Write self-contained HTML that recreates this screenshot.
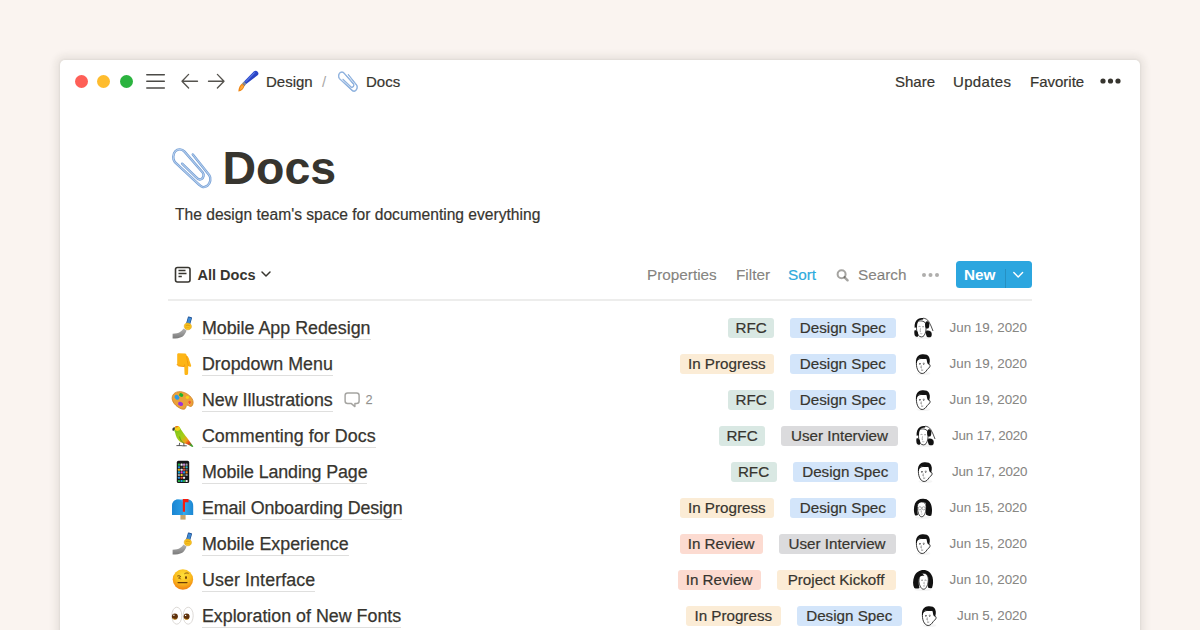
<!DOCTYPE html>
<html><head><meta charset="utf-8">
<style>
*{margin:0;padding:0;box-sizing:border-box}
html,body{width:1200px;height:630px;overflow:hidden;background:#faf4f0;font-family:"Liberation Sans",sans-serif;color:#37352f}
.win{position:absolute;left:60px;top:60px;width:1080px;height:620px;background:#fff;border-radius:5px;
 box-shadow:0 0 7px 5px rgba(45,38,32,0.075),0 0 2px 1px rgba(45,38,32,0.05)}
.abs{position:absolute;white-space:nowrap}
.dot{position:absolute;width:13px;height:13px;border-radius:50%}
.nav{font-size:15px;color:#37352f;top:72px;line-height:20px;-webkit-text-stroke:0.2px currentColor}
.tb{font-size:15.3px;line-height:20px;top:265px;color:rgba(55,53,47,0.6);-webkit-text-stroke:0.2px currentColor}
.row{position:absolute;left:168px;width:864px;height:36px}
.title{position:absolute;left:33.9px;top:7px;font-size:17.85px;-webkit-text-stroke:0.25px #37352f;line-height:22px;color:#37352f;
 border-bottom:1px solid rgba(55,53,47,0.16);padding-bottom:0}
.right{position:absolute;right:5px;top:8px;height:20px;display:flex;align-items:center}
.tag{height:20px;line-height:20px;border-radius:3px;padding:0;text-align:center;font-size:15.2px;color:#37352f;margin-right:16px;-webkit-text-stroke:0.2px #37352f}
.rfc{background:#d9e8e3;width:46px}
.ds{background:#d3e5fa;width:105.5px}
.ip{background:#fbecd6;width:94.5px}
.ui{background:#dbdbdd;width:117px}
.ir{background:#fcdbd1;width:83px}
.pk{background:#fcecd5;width:119px}
.av{width:22px;height:22px;margin-right:16px;display:flex;justify-content:center}
.date{white-space:nowrap;font-size:13.4px;color:rgba(55,53,47,0.6);-webkit-text-stroke:0.15px rgba(55,53,47,0.5);text-align:right;position:relative;top:-0.7px}
.emo{position:absolute;left:2px;top:6px;width:24px;height:24px}
</style></head><body>
<!-- DEFS -->
<svg width="0" height="0" style="position:absolute">
<defs>
 <linearGradient id="g-arm" x1="0" y1="1" x2="1" y2="0"><stop offset="0" stop-color="#8e8e8e"/><stop offset="1" stop-color="#c9c9c9"/></linearGradient>
 <linearGradient id="g-par" x1="0" y1="0" x2="1" y2="1"><stop offset="0" stop-color="#e8d23a"/><stop offset="0.35" stop-color="#5fae3a"/><stop offset="0.75" stop-color="#4f9a33"/><stop offset="1" stop-color="#e0662a"/></linearGradient>
 <radialGradient id="g-face" cx="0.4" cy="0.35" r="0.7"><stop offset="0" stop-color="#ffd35a"/><stop offset="1" stop-color="#f59a1c"/></radialGradient>
 <symbol id="e-selfie" viewBox="0 0 24 24">
  <linearGradient id="g-arm2" x1="0" y1="0" x2="0" y2="1"><stop offset="0" stop-color="#b5b5b5"/><stop offset="1" stop-color="#7a7a7a"/></linearGradient>
  <path d="M2.6 17.8C6 17.5 8.5 17 10 16C11.5 15 12.5 13.8 13.6 12.4L16.6 14.4C15.5 17.2 14 19.6 12.3 20.8C10 22.2 6.2 22.6 2.6 22.6Z" fill="url(#g-arm2)"/>
  <g transform="rotate(16 19 4.5)"><rect x="17" y="0.7" width="4.2" height="7.6" rx="0.7" fill="#1d4a8c"/><rect x="17.6" y="1.4" width="3" height="6" fill="#3f8ad2"/></g>
  <path d="M14.2 10.2C14.2 8.2 15.6 6.9 17.6 7C19.9 7.1 21.7 8.6 21.5 10.8C21.3 12.8 19.6 14 17.6 13.8C15.6 13.6 14.2 12.2 14.2 10.2Z" fill="#f7c21f" stroke="#dd9b0b" stroke-width="0.45"/><path d="M16 9.6C16.8 9 18.2 9 19.4 9.6" fill="none" stroke="#d9920a" stroke-width="0.9" stroke-linecap="round"/><path d="M15.6 11.6C16.6 11.2 18 11.3 19.2 11.8" fill="none" stroke="#e8a812" stroke-width="0.7" stroke-linecap="round"/>
 </symbol>
 <symbol id="e-point" viewBox="0 0 24 24">
  <path d="M7.2 2.6C7.2 1.7 7.9 1.2 8.8 1.2L15.2 1.4C16 1.5 16.6 2.4 16.8 3.8C18.2 4.8 19.1 6.4 19.4 8.4L21.1 13.2C21.4 14.3 20.6 15.2 19.7 14.7L18.3 13.9L18.1 21.4C18 22.4 17.1 23 16.2 23C15.2 23 14.5 22.3 14.5 21.4L14.3 14.6L9 14C8 13.9 7.2 13.1 7.2 12Z" fill="#fdb516"/>
  <path d="M14.3 14.6L14.5 12.5M16.6 4C17 7 17.6 10 18.3 13.9" fill="none" stroke="#f39a0a" stroke-width="0.9"/>
  <path d="M7.2 12C7.2 13.1 8 13.9 9 14L14.3 14.6" fill="none" stroke="#f29208" stroke-width="0.9"/>
 </symbol>
 <symbol id="e-palette" viewBox="0 0 24 24">
  <g transform="rotate(28 12.5 12.5)">
   <path d="M12.5 4.5C18.8 4.5 23.5 7.6 23.5 12C23.5 13.8 22.3 14.4 20.6 14.2C18.9 14 18 15.2 18.6 16.8C19.3 18.8 17.8 20.5 14 20.5C6.8 20.5 1.5 17.2 1.5 12.3C1.5 7.8 6.4 4.5 12.5 4.5Z" fill="#eba23a" stroke="#cf7f1c" stroke-width="0.7"/>
   <ellipse cx="19.8" cy="11.4" rx="1.3" ry="1.1" fill="#fff"/>
  </g>
  <ellipse cx="7" cy="9.3" rx="2.7" ry="2.1" transform="rotate(40 7 9.3)" fill="#2c9be8"/>
  <ellipse cx="11.2" cy="7" rx="2.2" ry="1.8" transform="rotate(30 11.2 7)" fill="#1fb32d"/>
  <ellipse cx="17.4" cy="9.5" rx="1.7" ry="1.4" fill="#f7d21a"/>
  <ellipse cx="19.6" cy="14.5" rx="1.4" ry="1.7" fill="#f05a2a"/>
  <ellipse cx="10.6" cy="15.8" rx="2.6" ry="2" transform="rotate(20 10.6 15.8)" fill="#9b33d6"/>
 </symbol>
 <symbol id="e-parrot" viewBox="0 0 24 24">
  <linearGradient id="g-par2" x1="0.1" y1="0.1" x2="0.9" y2="0.9"><stop offset="0" stop-color="#7bc41c"/><stop offset="0.45" stop-color="#a7cf16"/><stop offset="0.7" stop-color="#f0a21a"/><stop offset="0.85" stop-color="#e8401a"/><stop offset="1" stop-color="#3fa02a"/></linearGradient>
  <path d="M4.3 4.2C5.5 2 8.5 1.6 9.8 3.6C10.6 4.8 11.5 6.5 13.2 8.8C15.8 12.3 18.5 15.5 23.4 22.6L22.2 23.1C18.8 20.5 15.5 19.8 12.8 19C9.2 18 6.7 14.8 5.8 11.2C5.3 9 4.9 7.6 4.3 7Z" fill="url(#g-par2)"/>
  <path d="M9.5 12.5C10 15.5 11.5 18 14.5 19.5" fill="none" stroke="#3f8f1e" stroke-width="1.2" opacity="0.6"/>
  <path d="M4.6 3.6C5.8 1.8 8.6 1.5 9.9 3.4C10.4 4.3 10.2 5.8 8.8 6.6C7.4 7.2 5.5 6.8 4.6 5.6Z" fill="#f2d31a"/>
  <path d="M5 2.8C6 1.9 7.4 1.8 8.2 2.4C7.6 3.2 6.4 3.6 5.2 3.6Z" fill="#ee6a1e"/>
  <path d="M4.8 3.4C3.6 3.2 2.6 4 2.4 5.2C2.3 6.2 2.8 7 3.6 7.1C3.6 6.3 4.1 5.8 4.8 5.8Z" fill="#3a3a3a"/>
  <path d="M6.8 21.6H11.5M12.2 21.8H16.4M9.6 19.2L9.2 21.6M13.8 19.6L14 21.8" fill="none" stroke="#4a4a4a" stroke-width="0.9" stroke-linecap="round"/>
 </symbol>
 <symbol id="e-phone" viewBox="0 0 24 24">
  <rect x="6.8" y="0.8" width="12.4" height="22.3" rx="1.6" fill="#151517"/>
  <rect x="7.90" y="3.55" width="2.1" height="2.1" rx="0.5" fill="#22b24c"/><rect x="10.55" y="3.55" width="2.1" height="2.1" rx="0.5" fill="#f2f2f2"/><rect x="13.00" y="3.55" width="2.1" height="2.1" rx="0.5" fill="#c58ad8"/><rect x="15.55" y="3.55" width="2.1" height="2.1" rx="0.5" fill="#9a9a9a"/><rect x="7.90" y="6.15" width="2.1" height="2.1" rx="0.5" fill="#1f8fe0"/><rect x="10.55" y="6.15" width="2.1" height="2.1" rx="0.5" fill="#333"/><rect x="13.00" y="6.15" width="2.1" height="2.1" rx="0.5" fill="#b0703a"/><rect x="15.55" y="6.15" width="2.1" height="2.1" rx="0.5" fill="#27b7c8"/><rect x="7.90" y="8.75" width="2.1" height="2.1" rx="0.5" fill="#e7b21a"/><rect x="10.55" y="8.75" width="2.1" height="2.1" rx="0.5" fill="#dfe4e4"/><rect x="13.00" y="8.75" width="2.1" height="2.1" rx="0.5" fill="#d8403a"/><rect x="15.55" y="8.75" width="2.1" height="2.1" rx="0.5" fill="#666"/><rect x="7.90" y="11.35" width="2.1" height="2.1" rx="0.5" fill="#1ea7d6"/><rect x="10.55" y="11.35" width="2.1" height="2.1" rx="0.5" fill="#e43cc8"/><rect x="13.00" y="11.35" width="2.1" height="2.1" rx="0.5" fill="#1e8fe0"/><rect x="15.55" y="11.35" width="2.1" height="2.1" rx="0.5" fill="#f28a12"/><rect x="7.90" y="13.95" width="2.1" height="2.1" rx="0.5" fill="#9c9c9c"/><rect x="10.55" y="13.95" width="2.1" height="2.1" rx="0.5" fill="#f0c81c"/><rect x="13.00" y="13.95" width="2.1" height="2.1" rx="0.5" fill="#444"/><rect x="15.55" y="13.95" width="2.1" height="2.1" rx="0.5" fill="#8d8d8d"/><rect x="7.90" y="16.65" width="2.1" height="2.1" rx="0.5" fill="#2a8ee0"/><rect x="10.55" y="16.65" width="2.1" height="2.1" rx="0.5" fill="#e84a3a"/><rect x="13.00" y="16.65" width="2.1" height="2.1" rx="0.5" fill="#e8e8e8"/><rect x="15.55" y="16.65" width="2.1" height="2.1" rx="0.5" fill="#1c1c1e"/><rect x="7.90" y="19.95" width="2.1" height="2.1" rx="0.5" fill="#27b04a"/><rect x="10.55" y="19.95" width="2.1" height="2.1" rx="0.5" fill="#1eb0e0"/><rect x="13.00" y="19.95" width="2.1" height="2.1" rx="0.5" fill="#27b04a"/><rect x="15.55" y="19.95" width="2.1" height="2.1" rx="0.5" fill="#eeeeee"/>
 </symbol>
 <symbol id="e-mailbox" viewBox="0 0 24 24">
  <linearGradient id="g-mb" x1="0" y1="0" x2="1" y2="0"><stop offset="0" stop-color="#1a7fcb"/><stop offset="0.5" stop-color="#3ab0f0"/><stop offset="1" stop-color="#1b86d2"/></linearGradient>
  <rect x="10.4" y="18.4" width="5.2" height="5.2" fill="#c9a66a"/>
  <path d="M2 10C2 6.2 4.5 3.6 8 3.6H18C21 3.6 23.2 6.2 23.2 10V18.9H2Z" fill="url(#g-mb)"/>
  <path d="M2 18.9V10C2 6.2 4.5 3.6 8 3.6C11 3.6 13 6.2 13 10V18.9Z" fill="#1c8ad8" opacity="0.55"/>
  <path d="M12.8 2.9H18.5V6.2H15V15.8H12.8Z" fill="#f51d10"/>
 </symbol>
 <symbol id="e-raised" viewBox="0 0 24 24">
  <radialGradient id="g-face2" cx="0.5" cy="0.3" r="0.65"><stop offset="0" stop-color="#fde03a"/><stop offset="0.6" stop-color="#fbbd1e"/><stop offset="1" stop-color="#f28a14"/></radialGradient>
  <circle cx="12.9" cy="11.5" r="10.2" fill="url(#g-face2)"/>
  <path d="M7.2 8.2C8.2 7.4 9.8 7.6 10.8 8.6C9.8 9 8.8 9.4 8.6 10.2C9.6 10.2 10.6 10.5 10.8 11.2" fill="none" stroke="#7a4a0a" stroke-width="0.9"/>
  <ellipse cx="16" cy="9.6" rx="0.9" ry="1.6" fill="#6a3a06"/>
  <path d="M14.4 5.8C15.6 4.9 17.2 4.8 18.6 5.3" fill="none" stroke="#7a4a0a" stroke-width="0.9"/>
  <path d="M8 14.6H17" stroke="#6a3a06" stroke-width="1.1" stroke-linecap="round"/>
 </symbol>
 <symbol id="e-eyes" viewBox="0 0 24 24">
  <ellipse cx="6.8" cy="11.7" rx="5" ry="8.5" fill="#fff" stroke="#cfcac6" stroke-width="0.7"/>
  <ellipse cx="18.2" cy="11.7" rx="5" ry="8.5" fill="#fff" stroke="#cfcac6" stroke-width="0.7"/>
  <circle cx="4.9" cy="12.4" r="3" fill="#5e300a"/>
  <circle cx="16.6" cy="12.6" r="3" fill="#5e300a"/>
  <path d="M2.6 14C3.4 15.2 5 15.6 6.6 15" fill="none" stroke="#d99a1a" stroke-width="0.8"/>
  <path d="M14.3 14.2C15.1 15.4 16.7 15.8 18.3 15.2" fill="none" stroke="#d99a1a" stroke-width="0.8"/>
  <circle cx="3.9" cy="11.2" r="0.7" fill="#fff"/><circle cx="15.6" cy="11.4" r="0.7" fill="#fff"/>
 </symbol>
 <symbol id="e-brush" viewBox="0 0 24 24">
  <linearGradient id="g-brush" x1="0" y1="0" x2="1" y2="1"><stop offset="0" stop-color="#3a5ee8"/><stop offset="1" stop-color="#1c2fa8"/></linearGradient>
  <path d="M18 1.3A2.7 2.7 0 0 1 21.6 5.3L10.2 14L8 11.4Z" fill="url(#g-brush)"/>
  <path d="M18.6 2.6L10 11.6" stroke="#8fb0ff" stroke-width="0.8" stroke-linecap="round" opacity="0.8"/>
  <path d="M8 11.4L10.2 14L8.4 16.2L6.1 13.6Z" fill="#6d717a"/>
  <path d="M7.2 12.5L9.2 14.8" stroke="#b9bdc4" stroke-width="0.7"/>
  <path d="M6.1 13.6L8.4 16.2C7.8 18.8 5.5 21 2.3 21.6C2.6 18.4 3.8 15 6.1 13.6Z" fill="#ef8410"/>
  <path d="M6 15L7.3 16.4C6.8 18 5.5 19.4 3.8 19.9C4.1 18 4.8 16 6 15Z" fill="#ffa93a"/>
 </symbol>
 <symbol id="e-clip" viewBox="0 0 48 48">
   <path d="M24.8 9.5L41.3 30.2C43.5 33.2 42.3 38.5 39.3 40.8C36.3 43 33.2 42 31.5 40L6.9 17.2C4.5 14.5 4.8 9 7.3 6.3C9.8 3.6 14 3.8 16.5 6.6L34.7 27.5C36.4 29.7 35.5 32.8 33.5 34C31.5 35.2 29.5 34 28.2 32.3L14.1 18.7" fill="none" stroke="#6f9bd3" stroke-width="2.4" stroke-linecap="round"/>
   <path d="M24.8 9.5L41.3 30.2C43.5 33.2 42.3 38.5 39.3 40.8C36.3 43 33.2 42 31.5 40L6.9 17.2C4.5 14.5 4.8 9 7.3 6.3C9.8 3.6 14 3.8 16.5 6.6L34.7 27.5C36.4 29.7 35.5 32.8 33.5 34C31.5 35.2 29.5 34 28.2 32.3L14.1 18.7" fill="none" stroke="#b4cdec" stroke-width="1.1" stroke-linecap="round"/>
 </symbol>
 <symbol id="i-comment" viewBox="0 0 18 18">
  <path d="M3.6 1H12.6C14.1 1 15.1 2 15.1 3.5V8.9C15.1 10.4 14.1 11.4 12.6 11.4H10.9V14.6L7.1 11.4H3.6C2.1 11.4 1.1 10.4 1.1 8.9V3.5C1.1 2 2.1 1 3.6 1Z" fill="none" stroke="rgba(55,53,47,0.45)" stroke-width="1.45" stroke-linejoin="round"/>
 </symbol>
 <symbol id="a-m1" viewBox="0 0 22 22">
  <ellipse cx="11.5" cy="20.5" rx="7" ry="1.6" fill="#000" opacity="0.04"/>
  <path d="M4.5 8C4.2 11 4.5 14 5.4 16.2C6.4 18.8 8.2 20.5 10.2 20.5C12.2 20.5 13.8 18.8 15.3 16.5C16.2 15.5 17.2 14.8 17.8 13.8C18.4 12.6 18 11.2 16.9 11.2L16.9 6C15 4.5 7 4.5 4.5 8Z" fill="#fff" stroke="#111" stroke-width="0.85" stroke-linejoin="round"/>
  <path d="M4 9.8C3.5 6.5 4.8 3.5 7 2.2C9 1 12.5 0.8 14.8 1.8C16.8 2.8 17.9 5 17.7 8C17.6 9.5 17.1 10.8 16.4 11.6C15.6 11 15.2 9.8 15 8.5C14.8 7.2 14.6 6.2 14.2 5.8C12.5 6.3 9 6 7 5.6C6 6.5 5.2 8 4.8 10.2Z" fill="#111"/>
  <path d="M7 10.6C7.6 10.3 8.4 10.3 8.9 10.6M10.8 10.4C11.4 10.1 12.2 10.1 12.7 10.4" fill="none" stroke="#333" stroke-width="0.7"/>
  <ellipse cx="7.9" cy="11.4" rx="0.7" ry="0.45" fill="#222"/><ellipse cx="11.7" cy="11.2" rx="0.7" ry="0.45" fill="#222"/>
  <path d="M9.3 12.5L8.9 14.8L9.8 15M9 17C9.6 17.3 10.6 17.3 11.2 17" fill="none" stroke="#444" stroke-width="0.6"/>
 </symbol>
 <symbol id="a-m2" viewBox="0 0 22 22"><use href="#a-m1"/></symbol>
 <symbol id="a-w1" viewBox="0 0 22 22">
  <ellipse cx="11" cy="20.6" rx="8" ry="1.5" fill="#000" opacity="0.04"/>
  <path d="M5.4 4.8C4.4 7 4.3 11 4.8 14.5C5.3 17.5 7 19.9 9.4 19.9C11.6 19.9 12.9 18 13.6 15C14.2 12.5 14.2 9 13.6 6.2C12 3.8 7.5 3.2 5.4 4.8Z" fill="#fff" stroke="#111" stroke-width="0.8"/>
  <path d="M2.6 10.8C2.3 7 3.4 3.6 6 2C7.5 1 9.5 0.7 11 1L11.2 2.5C9 2.5 7 3.3 6 4.6C5 6 4.8 8.2 4.9 10.2Z" fill="#111"/>
  <path d="M11 1.2C13.5 1.3 15.5 2.5 16.8 4.6C18.5 7.5 19.8 10.5 21 14" fill="none" stroke="#222" stroke-width="0.8"/>
  <ellipse cx="15.2" cy="7.9" rx="2.1" ry="3.7" fill="#111"/>
  <path d="M14.2 13.8C15.6 13.3 17.6 13.6 19 14.8C19.9 16 20 18 19.3 19.5C18.2 20.6 16.2 20.6 14.9 19.8C13.9 18.6 13.7 15.6 14.2 13.8Z" fill="#111"/>
  <path d="M2.6 13.3C3.6 12.9 4.9 13.4 5.6 14.8C6.2 16.3 6.5 18.3 6 19.4C5 19.9 3.5 19.6 2.8 18.4C2.2 17 2.1 14.8 2.6 13.3Z" fill="#111"/>
  <path d="M6.6 9.6C7.2 9.3 8 9.3 8.5 9.7M10.2 9.8C10.8 9.5 11.6 9.6 12 9.9" fill="none" stroke="#666" stroke-width="0.7"/>
  <path d="M8.5 11.3L8.1 14.6L9 14.8M8.2 16.6C8.8 16.9 9.7 16.9 10.3 16.6" fill="none" stroke="#777" stroke-width="0.55"/>
 </symbol>
 <symbol id="a-w2" viewBox="0 0 22 22">
  <ellipse cx="11" cy="20.5" rx="8" ry="1.5" fill="#000" opacity="0.04"/>
  <path d="M3 18.2C1.5 15 1.6 10 3 6.5C4.5 3 8 1.5 11.5 1.8C15.5 2 18.5 4.5 19.5 9C20.3 13 20.1 16 19.2 18.8C17.2 19.2 15.2 18.6 13.9 17.6L13.9 6C11 5 7 5.5 5.8 7.5C5 11 5.2 15 6 18C5 18.6 4 18.6 3 18.2Z" fill="#111"/>
  <path d="M5.4 9.5C5.4 6.5 7.3 4.9 9.8 4.9C12.4 4.9 14.1 6.6 14.1 9.6C14.1 14 12.9 19.6 9.8 19.8C6.8 20 5.4 14 5.4 9.5Z" fill="#fff" stroke="#111" stroke-width="0.8"/>
  <path d="M13.2 3.5C15 3.8 16.5 6 16.8 9C17 12 16.5 15.5 16 18" fill="none" stroke="#111" stroke-width="2.5"/>
  <circle cx="7.9" cy="11.3" r="1.6" fill="none" stroke="#777" stroke-width="0.6"/><circle cx="11.7" cy="11.3" r="1.6" fill="none" stroke="#777" stroke-width="0.6"/>
  <path d="M9.4 13.5L9.1 15.2L9.8 15.3M8.8 17C9.3 17.2 10 17.2 10.5 17" fill="none" stroke="#777" stroke-width="0.55"/>
 </symbol>
 <symbol id="a-w3" viewBox="0 0 22 22">
  <ellipse cx="11" cy="20.8" rx="8.5" ry="1.4" fill="#000" opacity="0.04"/>
  <path d="M2.3 19C0.6 16 0.7 11 2.4 7C4 3.5 7.5 1 11.5 1C15.5 1 19 3.5 20.5 8C21.5 12 21.2 16 20 19C18.5 19.6 17 19.3 16 18.6L16.2 8C14.5 5.5 12 4.5 9.5 5C8 6 7.2 8 6.8 10C6.5 13.5 6.8 16.5 7.5 19C6 19.8 3.8 19.8 2.3 19Z" fill="#111"/>
  <path d="M6.9 11C6.9 7.5 8.4 4.4 11.5 4.3C14.6 4.2 16.3 7 16.3 10.5C16.3 15 14.5 20.2 11.6 20.2C8.6 20.2 6.9 15 6.9 11Z" fill="#fff" stroke="#111" stroke-width="0.8"/>
  <path d="M6.5 4.5C9 3.5 11.5 5 12.5 7C11 6.5 9 7 7.5 8.2C7 10.5 6.8 14 7.2 18" fill="#111"/>
  <path d="M9.2 11.3C9.8 11 10.6 11.1 11 11.4M12.6 11.3C13.2 11 14 11.1 14.4 11.4" fill="none" stroke="#555" stroke-width="0.7"/>
  <path d="M12.2 12.8L11.9 14.8L12.6 15M11 16.8C11.6 17.1 12.5 17.1 13.1 16.8" fill="none" stroke="#666" stroke-width="0.55"/>
 </symbol>
</defs>
</svg>
<!-- /DEFS -->
<div class="win"></div>

<!-- traffic lights -->
<div class="dot" style="left:74.5px;top:74.5px;background:#fe5f57"></div>
<div class="dot" style="left:97px;top:74.5px;background:#febc2e"></div>
<div class="dot" style="left:119.5px;top:74.5px;background:#2bb33f"></div>

<!-- hamburger -->
<svg class="abs" style="left:145px;top:72px" width="22" height="20" viewBox="0 0 22 20">
 <path d="M1.8 2.7H19.3M1.8 9.2H19.3M1.8 16H19.3" stroke="#4b4a47" stroke-width="1.5" stroke-linecap="round"/>
</svg>
<!-- arrows -->
<svg class="abs" style="left:179px;top:72px" width="50" height="20" viewBox="0 0 50 20">
 <path d="M3 9.2H18.5M9.6 2.4L3 9.2L9.6 16" fill="none" stroke="#55534e" stroke-width="1.35" stroke-linecap="round" stroke-linejoin="round"/>
 <path d="M29.5 9.2H45M38.4 2.4L45 9.2L38.4 16" fill="none" stroke="#55534e" stroke-width="1.35" stroke-linecap="round" stroke-linejoin="round"/>
</svg>

<svg class="abs" style="left:236px;top:70px" width="24" height="24" viewBox="0 0 24 24"><use href="#e-brush"/></svg>
<svg class="abs" style="left:336px;top:70px" width="24" height="24" viewBox="0 0 48 48"><use href="#e-clip"/></svg>
<div class="abs nav" style="left:266px">Design</div>
<div class="abs nav" style="left:322px;color:rgba(55,53,47,0.4)">/</div>
<div class="abs nav" style="left:366px">Docs</div>

<div class="abs nav" style="left:895px">Share</div>
<div class="abs nav" style="left:953px;letter-spacing:0.35px">Updates</div>
<div class="abs nav" style="left:1030px">Favorite</div>
<svg class="abs" style="left:1099px;top:76px" width="24" height="10" viewBox="0 0 24 10">
 <circle cx="4" cy="5" r="2.6" fill="#37352f"/><circle cx="11.5" cy="5" r="2.6" fill="#37352f"/><circle cx="19" cy="5" r="2.6" fill="#37352f"/>
</svg>

<!-- title -->
<svg class="abs" style="left:168px;top:145px" width="48" height="48" viewBox="0 0 48 48"><use href="#e-clip"/></svg>
<div class="abs" style="left:222.5px;top:139.6px;font-size:46.5px;font-weight:bold;line-height:56px;color:#37352f">Docs</div>
<div class="abs" style="left:175px;top:204.2px;font-size:15.6px;line-height:22px;color:#37352f;-webkit-text-stroke:0.2px #37352f">The design team's space for documenting everything</div>

<!-- toolbar -->
<svg class="abs" style="left:174px;top:266px" width="18" height="18" viewBox="0 0 18 18">
 <rect x="1.5" y="1.5" width="14.5" height="14.5" rx="2" fill="none" stroke="#37352f" stroke-width="1.6"/>
 <path d="M4.5 4.6H11.5M4.5 7.6H12.5M4.5 10.6H7.8" stroke="#37352f" stroke-width="1.5"/>
</svg>
<div class="abs" style="left:197.5px;top:265.2px;font-size:14.5px;font-weight:bold;line-height:20px;color:#37352f">All Docs</div>
<svg class="abs" style="left:260px;top:269px" width="12" height="10" viewBox="0 0 12 10">
 <path d="M2 3L6 7L10 3" fill="none" stroke="#37352f" stroke-width="1.5" stroke-linecap="round" stroke-linejoin="round"/>
</svg>

<div class="abs tb" style="left:647px">Properties</div>
<div class="abs tb" style="left:736px">Filter</div>
<div class="abs tb" style="left:788px;color:#2eaadc">Sort</div>
<svg class="abs" style="left:835px;top:267px" width="16" height="16" viewBox="0 0 16 16">
 <circle cx="6.6" cy="7.2" r="4" fill="none" stroke="rgba(55,53,47,0.45)" stroke-width="2"/>
 <path d="M9.6 10.3L12.6 13.3" stroke="rgba(55,53,47,0.45)" stroke-width="2.4" stroke-linecap="round"/>
</svg>
<div class="abs tb" style="left:858px">Search</div>
<svg class="abs" style="left:921px;top:270px" width="19" height="10" viewBox="0 0 19 10">
 <circle cx="3" cy="5" r="2" fill="rgba(55,53,47,0.4)"/><circle cx="9.5" cy="5" r="2" fill="rgba(55,53,47,0.4)"/><circle cx="16" cy="5" r="2" fill="rgba(55,53,47,0.4)"/>
</svg>
<div class="abs" style="left:955.6px;top:261.2px;width:76.2px;height:26.8px;background:#2ca6df;border-radius:3.5px"></div>
<div class="abs" style="left:1005px;top:269px;width:1px;height:19px;background:rgba(0,0,0,0.13)"></div>
<div class="abs" style="left:964px;top:265px;font-size:15.3px;font-weight:bold;line-height:20px;color:#fff">New</div>
<svg class="abs" style="left:1012px;top:270px" width="12" height="9" viewBox="0 0 12 9">
 <path d="M1.8 2.6L6.2 7L10.6 2.6" fill="none" stroke="#fff" stroke-width="1.4" stroke-linecap="round" stroke-linejoin="round"/>
</svg>

<div class="abs" style="left:168px;top:299.3px;width:864px;height:1.4px;background:rgba(55,53,47,0.09)"></div>

<!-- ROWS -->
<div class="row" style="top:310px">
 <svg class="emo" viewBox="0 0 24 24"><use href="#e-selfie"/></svg>
 <div class="title">Mobile App Redesign</div>
 <div class="right"><div class="tag rfc">RFC</div><div class="tag ds">Design Spec</div><div class="av"><svg width="22" height="22" viewBox="0 0 22 22"><use href="#a-w1"/></svg></div><div class="date">Jun 19, 2020</div></div>
</div>
<div class="row" style="top:346px">
 <svg class="emo" viewBox="0 0 24 24"><use href="#e-point"/></svg>
 <div class="title">Dropdown Menu</div>
 <div class="right"><div class="tag ip">In Progress</div><div class="tag ds">Design Spec</div><div class="av"><svg width="22" height="22" viewBox="0 0 22 22"><use href="#a-m1"/></svg></div><div class="date">Jun 19, 2020</div></div>
</div>
<div class="row" style="top:382px">
 <svg class="emo" viewBox="0 0 24 24"><use href="#e-palette"/></svg>
 <div class="title">New Illustrations</div>
 <svg class="abs" style="left:176px;top:10px" width="18" height="18" viewBox="0 0 18 18"><use href="#i-comment"/></svg>
 <div class="abs" style="left:197.5px;top:9px;font-size:12.8px;line-height:18px;color:rgba(55,53,47,0.5);-webkit-text-stroke:0.25px rgba(55,53,47,0.4)">2</div>
 <div class="right"><div class="tag rfc">RFC</div><div class="tag ds">Design Spec</div><div class="av"><svg width="22" height="22" viewBox="0 0 22 22"><use href="#a-m1"/></svg></div><div class="date">Jun 19, 2020</div></div>
</div>
<div class="row" style="top:418px">
 <svg class="emo" viewBox="0 0 24 24"><use href="#e-parrot"/></svg>
 <div class="title" style="letter-spacing:0.07px">Commenting for Docs</div>
 <div class="right"><div class="tag rfc">RFC</div><div class="tag ui">User Interview</div><div class="av"><svg width="22" height="22" viewBox="0 0 22 22"><use href="#a-w1"/></svg></div><div class="date" style="width:75px;letter-spacing:-0.17px">Jun 17, 2020</div></div>
</div>
<div class="row" style="top:454px">
 <svg class="emo" viewBox="0 0 24 24"><use href="#e-phone"/></svg>
 <div class="title" style="letter-spacing:-0.11px">Mobile Landing Page</div>
 <div class="right"><div class="tag rfc">RFC</div><div class="tag ds">Design Spec</div><div class="av"><svg width="22" height="22" viewBox="0 0 22 22"><use href="#a-m1"/></svg></div><div class="date" style="width:75px;letter-spacing:-0.17px">Jun 17, 2020</div></div>
</div>
<div class="row" style="top:490px">
 <svg class="emo" viewBox="0 0 24 24"><use href="#e-mailbox"/></svg>
 <div class="title" style="letter-spacing:-0.12px">Email Onboarding Design</div>
 <div class="right"><div class="tag ip">In Progress</div><div class="tag ds">Design Spec</div><div class="av"><svg width="22" height="22" viewBox="0 0 22 22"><use href="#a-w2"/></svg></div><div class="date">Jun 15, 2020</div></div>
</div>
<div class="row" style="top:526px">
 <svg class="emo" viewBox="0 0 24 24"><use href="#e-selfie"/></svg>
 <div class="title">Mobile Experience</div>
 <div class="right"><div class="tag ir">In Review</div><div class="tag ui">User Interview</div><div class="av"><svg width="22" height="22" viewBox="0 0 22 22"><use href="#a-m1"/></svg></div><div class="date">Jun 15, 2020</div></div>
</div>
<div class="row" style="top:562px">
 <svg class="emo" viewBox="0 0 24 24"><use href="#e-raised"/></svg>
 <div class="title" style="letter-spacing:0.1px">User Interface</div>
 <div class="right"><div class="tag ir">In Review</div><div class="tag pk">Project Kickoff</div><div class="av"><svg width="22" height="22" viewBox="0 0 22 22"><use href="#a-w3"/></svg></div><div class="date">Jun 10, 2020</div></div>
</div>
<div class="row" style="top:598px">
 <svg class="emo" viewBox="0 0 24 24"><use href="#e-eyes"/></svg>
 <div class="title">Exploration of New Fonts</div>
 <div class="right"><div class="tag ip">In Progress</div><div class="tag ds">Design Spec</div><div class="av"><svg width="22" height="22" viewBox="0 0 22 22"><use href="#a-m2"/></svg></div><div class="date" style="width:71px">Jun 5, 2020</div></div>
</div>
</body></html>
